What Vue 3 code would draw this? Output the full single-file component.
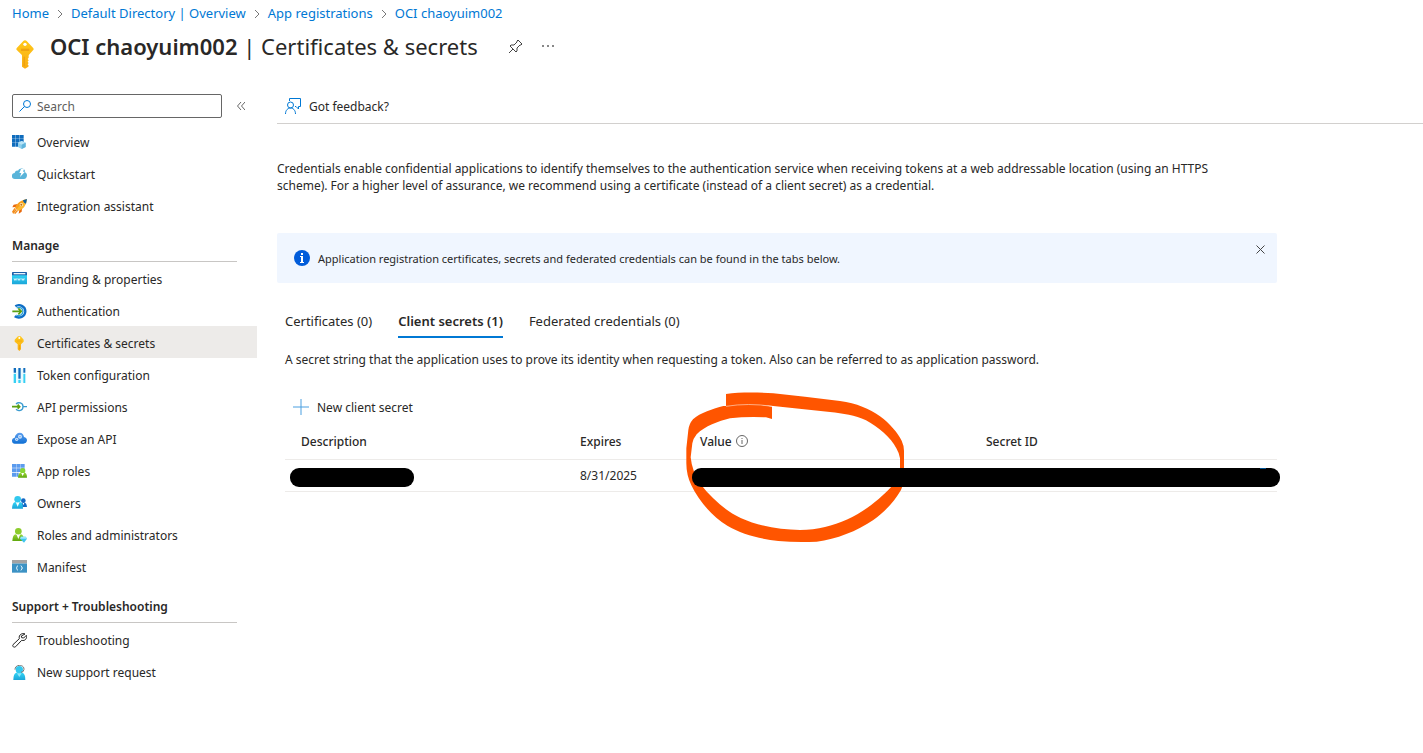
<script setup>
import { ref } from 'vue'

const search = ref('')

const crumbs = ['Home', 'Default Directory | Overview', 'App registrations', 'OCI chaoyuim002']

const groups = [
  {
    title: '',
    items: [
      { label: 'Overview', icon: 'overview' },
      { label: 'Quickstart', icon: 'quickstart' },
      { label: 'Integration assistant', icon: 'rocket' },
    ],
  },
  {
    title: 'Manage',
    items: [
      { label: 'Branding & properties', icon: 'branding' },
      { label: 'Authentication', icon: 'auth' },
      { label: 'Certificates & secrets', icon: 'key', active: true },
      { label: 'Token configuration', icon: 'token' },
      { label: 'API permissions', icon: 'permissions' },
      { label: 'Expose an API', icon: 'cloud' },
      { label: 'App roles', icon: 'approles' },
      { label: 'Owners', icon: 'owners' },
      { label: 'Roles and administrators', icon: 'admins' },
      { label: 'Manifest', icon: 'manifest' },
    ],
  },
  {
    title: 'Support + Troubleshooting',
    items: [
      { label: 'Troubleshooting', icon: 'wrench' },
      { label: 'New support request', icon: 'support' },
    ],
  },
]

const tabs = [
  { label: 'Certificates (0)' },
  { label: 'Client secrets (1)', active: true },
  { label: 'Federated credentials (0)' },
]
</script>

<template>
  <div class="page">
    <svg class="sprite" aria-hidden="true">
      <defs>
        <linearGradient id="gold" x1="0" y1="0" x2="0" y2="1">
          <stop offset="0" stop-color="#ffc81a" />
          <stop offset="1" stop-color="#f9ad14" />
        </linearGradient>
        <linearGradient id="cyan" x1="0" y1="0" x2="0" y2="1">
          <stop offset="0" stop-color="#32d4f5" />
          <stop offset="1" stop-color="#1ba5d8" />
        </linearGradient>
        <linearGradient id="azure" x1="0" y1="0" x2="0" y2="1">
          <stop offset="0" stop-color="#5ea0ef" />
          <stop offset="1" stop-color="#0f6fd4" />
        </linearGradient>
        <linearGradient id="lime" x1="0" y1="0" x2="0" y2="1">
          <stop offset="0" stop-color="#9ad63a" />
          <stop offset="1" stop-color="#5ea70c" />
        </linearGradient>
      </defs>
      <symbol id="overview" viewBox="0 0 45 45">
        <path fill="#0f6cbd" d="M0 0h11v11H0zM12 0h11v11H12zM24 0h11v11H24zM0 12h11v11H0zM12 12h11v11H12zM24 12h11v11H24zM0 24h11v11H0zM12 24h11v11H12z" />
        <path fill="#8fd0ee" d="M29 18l12 5v13l-12 6-11-6V23z" />
        <path fill="#b9e4f7" d="M29 18l12 5-12 6-11-6z" />
        <path fill="#5fb4dc" d="M29 29l12-6v13l-12 6z" />
      </symbol>
      <symbol id="quickstart" viewBox="0 0 45 45">
        <path fill="#59b4d9" d="M9 36a9 9 0 0 1-1-18c1-5 5-8 10-7 3-6 9-8 14-6 6 1 8 6 7 11 4 2 6 5 6 9 0 7-4 11-9 11z" />
        <path fill="#fff" d="M27 6h9l-3 8h6L24 30l4-12h-6z" />
      </symbol>
      <symbol id="rocket" viewBox="0 0 45 45">
        <path fill="#e8690c" d="M17 15L5 17l-4 8 11-1zM30 28l-1 10-9 6 2-12z" />
        <path fill="#f9a01b" d="M9 27C14 12 28 3 44 0c0 15-8 29-24 35z" />
        <path fill="#ffc83d" d="M14 31C22 20 34 9 44 0c0 15-8 29-24 35z" opacity=".6" />
        <path fill="#0f5f9e" d="M33 4l12-4-3 14c-5-1-8-5-9-10z" />
        <circle cx="28" cy="17" r="5" fill="#fff3d0" />
        <circle cx="28" cy="17" r="3" fill="#bd6b10" />
        <path stroke="#f28c1b" stroke-width="4" fill="none" d="M9 28L1 40M17 34L8 44M13 31L3 43" />
      </symbol>
      <symbol id="branding" viewBox="0 0 45 45">
        <path fill="url(#cyan)" d="M0 9h45v26q0 2-2 2H2q-2 0-2-2z" />
        <path fill="#1c5ea8" d="M2 0h41q2 0 2 2v8H0V2q0-2 2-2z" />
        <path fill="#e8f4fb" d="M5 3h35v4H5z" />
        <path stroke="#fff" stroke-width="2" fill="none" d="M6 19l2 6 2-5 2 5 2-6M17 19l2 6 2-5 2 5 2-6M29 19l2 6 2-5 2 5 2-6" />
      </symbol>
      <symbol id="auth" viewBox="0 0 45 45">
        <path stroke="#2ea3dc" stroke-width="4" fill="none" d="M14 12c9-5 19 0 19 10s-10 16-20 11" />
        <path stroke="#0f6fc6" stroke-width="7" fill="none" d="M10 7C22-1 40 6 40 22S22 45 8 37" />
        <path stroke="#5aa012" stroke-width="5" fill="none" d="M1 22h25M19 13l9 9-9 9" />
      </symbol>
      <symbol id="key" viewBox="0 0 45 45">
        <path fill="url(#gold)" d="M18 1h8l9 10v6l-8 8v15l-5 5-5-5V25L8 17v-6z" />
        <path fill="#fff" d="M22 3a3 3 0 1 1 0 6 3 3 0 0 1 0-6z" />
        <path fill="#e89a08" d="M14 14h16v2H14zM21 27h2v13h-2z" />
      </symbol>
      <symbol id="bigkey" viewBox="0 0 54 87">
        <path fill="url(#gold)" d="M27 1q3 0 5 2l19 20q4 4 0 8L39 44q-1 1-1 3v6l-3 4 3 4-3 4 3 4-3 4 3 4-1 3-10 6-9-6V47q0-2-1-3L3 31q-4-4 0-8L22 3q2-2 5-2z" />
        <circle cx="27" cy="13" r="5" fill="#fff" />
        <path fill="#e99a10" d="M15 26h25v3H15zM15 31h25v2H15zM23 50h3v29h-3z" />
      </symbol>
      <symbol id="token" viewBox="0 0 45 45">
        <path fill="#0f6cbd" d="M5 0h7v14H5zM19 0h7v32h-7zM34 0h6v14h-6z" />
        <path fill="#36d0f4" d="M5 17h7v28H5zM19 35h7v10h-7zM34 17h6v28h-6z" />
        <path fill="#8fe3fa" d="M14 3h2v40h-2zM29 3h2v40h-2z" opacity=".6" />
      </symbol>
      <symbol id="permissions" viewBox="0 0 45 45">
        <path stroke="#3a9bd0" stroke-width="4" fill="none" d="M12 12c7-7 21-4 21 8s-14 15-21 8M34 20h11" />
        <path stroke="#5aa012" stroke-width="5" fill="none" d="M0 20h22M17 14l6 6-6 6" />
      </symbol>
      <symbol id="cloud" viewBox="0 0 45 45">
        <path fill="url(#azure)" d="M10 35A9 9 0 0 1 8 17C9 8 16 2 23 2c8 0 12 6 13 13 6 1 9 5 9 10 0 6-5 10-11 10z" />
        <circle cx="14" cy="22" r="5" fill="#cfe4fb" />
        <circle cx="24" cy="14" r="6" fill="#cfe4fb" />
        <circle cx="14" cy="22" r="2" fill="#4b93ea" />
        <circle cx="24" cy="14" r="2" fill="#4b93ea" />
      </symbol>
      <symbol id="approles" viewBox="0 0 45 45">
        <path fill="#5b9bee" d="M0 0h12v11H0zM13 0h12v11H13zM26 0h12v11H26zM0 13h12v11H0zM13 13h12v11H13zM0 26h12v12H0zM13 26h7v12h-7zM26 13h12v7H26z" />
        <circle cx="32" cy="20" r="8" fill="#86d633" />
        <path fill="url(#lime)" d="M18 41q1-15 9-15l5 4 5-4q8 0 8 15z" />
        <path fill="#fff" d="M28 27h8l-4 10z" />
      </symbol>
      <symbol id="owners" viewBox="0 0 45 45">
        <circle cx="34" cy="14" r="7" fill="#1368c4" />
        <path fill="#1368c4" d="M24 33q1-13 7-13l3 3 3-3q7 0 8 13z" />
        <path fill="#fff" d="M32 21h5l-3 7z" />
        <circle cx="17" cy="10" r="10" fill="#32c8ee" />
        <path fill="url(#cyan)" d="M0 38q1-19 10-20l7 5 7-5q9 1 9 20z" />
        <path fill="#fff" d="M12 20h10l-5 12z" />
      </symbol>
      <symbol id="admins" viewBox="0 0 45 45">
        <circle cx="19" cy="10" r="10" fill="#8ccc2c" />
        <path fill="url(#lime)" d="M1 39q1-19 10-20l8 5 8-5q8 1 9 20z" />
        <path fill="#fff" d="M14 20h10l-5 13z" />
        <path fill="#3fc6ee" d="M27 26h14l4 6-9 12-12-12z" />
        <path fill="#9be7fa" d="M27 26h14l4 6H24z" />
      </symbol>
      <symbol id="manifest" viewBox="0 0 45 45">
        <path fill="#3c92c4" d="M0 10h45v28H0z" />
        <path fill="#a3a3a3" d="M0 0h45v10H0z" />
        <path stroke="#d7eefa" stroke-width="3" fill="none" d="M18 17q-3 0-3 4 0 3-3 3 3 0 3 3 0 4 3 4M26 17q3 0 3 4 0 3 3 3-3 0-3 3 0 4-3 4" />
      </symbol>
      <symbol id="wrench" viewBox="0 0 45 45">
        <path stroke="#222" stroke-width="3" fill="none" stroke-linejoin="round" d="M39 3c-8-4-20 2-17 14L3 35c-3 5 3 10 8 6l18-19c10 3 17-6 14-15l-8 8-6-1-1-5z" />
      </symbol>
      <symbol id="support" viewBox="0 0 45 45">
        <path stroke="#777" stroke-width="3" fill="none" d="M9 14C8-3 37-3 36 13" />
        <circle cx="22" cy="14" r="11" fill="#32c8ee" />
        <path fill="url(#cyan)" d="M4 45q0-20 9-22h18q9 2 9 22z" />
        <path fill="#8ee6fa" d="M15 25h14l-7 11z" />
        <path stroke="#777" stroke-width="3" fill="none" d="M36 13q-1 9-9 9" />
      </symbol>
    </svg>

    <header class="top">
      <nav class="crumbs" aria-label="Breadcrumb">
        <template v-for="(c, i) in crumbs" :key="c">
          <svg v-if="i" class="chevron" viewBox="0 0 6 10" aria-hidden="true">
            <path d="M1 1l4 4-4 4" fill="none" stroke="#777" />
          </svg>
          <a href="#">{{ c }}</a>
        </template>
      </nav>
      <div class="heading">
        <svg class="bigkey" aria-hidden="true"><use href="#bigkey" /></svg>
        <h1><b>OCI chaoyuim002</b> | Certificates &amp; secrets</h1>
        <button class="plain pin" type="button" aria-label="Pin">
          <svg viewBox="0 0 14 14" width="14" height="14" fill="none" stroke="#444">
            <path d="M9 1l4 4-1 1-1 0-3 3 0 3-1 1-6-6 1-1 3 0 3-3 0-1zM4 10l-4 4" />
          </svg>
        </button>
        <button class="plain more" type="button" aria-label="More">
          <svg viewBox="0 0 12 2" width="12" height="2" fill="#888">
            <path d="M0 0h2v2H0zM5 0h2v2H5zM10 0h2v2h-2z" />
          </svg>
        </button>
      </div>
    </header>

    <div class="body">
      <aside class="side">
        <div class="searchrow">
          <div class="search">
            <svg viewBox="0 0 12 12" width="12" height="12" fill="none" stroke="#0078d4" aria-hidden="true">
              <circle cx="8" cy="4" r="3.5" />
              <path d="M5.500 6.500L0.500 11.500" />
            </svg>
            <input v-model="search" type="text" placeholder="Search" aria-label="Search" />
          </div>
          <button class="plain" type="button" aria-label="Collapse menu">
            <svg viewBox="0 0 8 8" width="8" height="8" fill="none" stroke="#666">
              <path d="M4 0L0.500 4 4 8M8 0L4.500 4 8 8" />
            </svg>
          </button>
        </div>
        <nav aria-label="Resource menu">
          <section v-for="g in groups" :key="g.title">
            <h2 v-if="g.title">{{ g.title }}</h2>
            <a v-for="it in g.items" :key="it.label" href="#" class="item" :class="{ active: it.active }">
              <svg class="ico" aria-hidden="true"><use :href="'#' + it.icon" /></svg>
              <span>{{ it.label }}</span>
            </a>
          </section>
        </nav>
      </aside>

      <main class="main">
        <div class="toolbar">
          <button class="plain" type="button">
            <svg viewBox="0 0 16 16" width="16" height="16" fill="none" stroke="#0078d4" aria-hidden="true">
              <path d="M4.500 3V.500h11v8h-2v2.500l-2.500-2.500h-1" />
              <circle cx="5.500" cy="7" r="3" />
              <path d="M.500 16c0-8 10-8 10 0" />
            </svg>
            Got feedback?
          </button>
        </div>

        <div class="content">
          <p class="intro">
            Credentials enable confidential applications to identify themselves to the authentication service when
            receiving tokens at a web addressable location (using an HTTPS scheme). For a higher level of assurance, we
            recommend using a certificate (instead of a client secret) as a credential.
          </p>

          <div class="banner" role="status">
            <svg viewBox="0 0 16 16" width="16" height="16" aria-hidden="true">
              <circle cx="8" cy="8" r="8" fill="#015cda" />
              <path fill="#fff" d="M7 3h2v2H7zM6 6h3v6h1v1H6v-1h1V7H6z" />
            </svg>
            <span>Application registration certificates, secrets and federated credentials can be found in the tabs below.</span>
            <button class="plain close" type="button" aria-label="Dismiss">
              <svg viewBox="0 0 9 9" width="9" height="9" stroke="#444"><path d="M0.500 0.500l8 8M8.500 0.500l-8 8" /></svg>
            </button>
          </div>

          <div class="panel">
            <div class="tabs" role="tablist">
              <button
                v-for="t in tabs"
                :key="t.label"
                class="plain tab"
                :class="{ active: t.active }"
                type="button"
                role="tab"
                :aria-selected="!!t.active"
              >
                {{ t.label }}
              </button>
            </div>
            <p class="hint">
              A secret string that the application uses to prove its identity when requesting a token. Also can be
              referred to as application password.
            </p>
            <button class="plain new" type="button">
              <svg viewBox="0 0 16 16" width="16" height="16" stroke="#4a9fe0" aria-hidden="true">
                <path d="M8 0v16M0 8h16" />
              </svg>
              New client secret
            </button>

            <div class="tablewrap">
              <table>
                <colgroup>
                  <col class="c1" />
                  <col class="c2" />
                  <col class="c3" />
                  <col />
                </colgroup>
                <thead>
                  <tr>
                    <th scope="col">Description</th>
                    <th scope="col">Expires</th>
                    <th scope="col">
                      <span class="value">
                        Value
                        <svg viewBox="0 0 12 12" width="12" height="12" fill="none" stroke="#666" aria-hidden="true">
                          <circle cx="6" cy="6" r="5.500" />
                          <path d="M6 5v4M6 3v1" />
                        </svg>
                      </span>
                    </th>
                    <th scope="col">Secret ID</th>
                  </tr>
                </thead>
                <tbody>
                  <tr>
                    <td></td>
                    <td>8/31/2025</td>
                    <td></td>
                    <td></td>
                  </tr>
                </tbody>
              </table>
              <svg class="ring" viewBox="0 0 780 540" aria-hidden="true">
                <path
                  fill="#ff5500"
                  d="M168 42C210 36 265 37 310 40L405 50L510 63C560 70 598 86 630 109C660 131 684 160 695 182Q702 197 702 212V290Q702 312 693 330C675 362 645 395 610 420C560 454 500 477 440 485Q380 488 325 483C270 477 215 462 172 437C125 409 85 360 64 316Q49 285 49 250V205L55 150Q57 132 69 118C90 98 130 86 160 78L168 78C210 72 260 72 306 80V117L288 112Q230 109 180 115C145 124 105 138 80 163Q70 175 67 190L62 232Q66 275 92 313C125 355 165 392 212 414C265 438 330 449 390 450Q430 450 465 441C510 431 555 410 590 385C625 360 652 334 672 312Q690 285 690 262V235Q688 220 679 205C663 173 625 142 588 121C555 106 520 100 480 96L310 78Q240 70 168 78Z"
                />
                <path stroke="#ffd9c4" stroke-width="2" fill="none" d="M168 79Q235 68 306 79" />
              </svg>
              <svg class="marks" viewBox="0 0 996 20" aria-hidden="true">
                <rect x="5" y="0" width="124" height="19" rx="9" />
                <rect x="407" y="0" width="588" height="19" rx="9" />
                <path d="M975 0h6v1h-6z" fill="#00508f" />
              </svg>
            </div>
          </div>
        </div>
      </main>
    </div>
  </div>
</template>

<style>
body {
  background: #fff;
}
</style>

<style scoped>
.page {
  font-family: "Noto Sans", "Open Sans", sans-serif;
  font-size: 12px;
  line-height: 17px;
  color: #292827;
}
.page * {
  box-sizing: border-box;
}
.sprite {
  position: absolute;
  width: 0;
  height: 0;
}
a {
  color: #0078d4;
  text-decoration: none;
}
.plain {
  font: inherit;
  color: inherit;
  background: none;
  border: 0;
  padding: 0;
  display: flex;
  align-items: center;
}
.crumbs {
  display: flex;
  align-items: center;
  gap: 8px;
  padding: 5px 12px 0;
  font-size: 13px;
}
.chevron {
  width: 6px;
  height: 10px;
}
.heading {
  display: flex;
  align-items: center;
  height: 48px;
  padding-left: 16px;
}
.bigkey {
  width: 18px;
  height: 29px;
  margin: 16px 16px 0 0;
}
h1 {
  margin: 0;
  font-size: 22px;
  line-height: 30px;
  font-weight: 400;
}
h1 b {
  font-weight: 600;
}
.pin {
  margin-left: 31px;
}
.more {
  margin-left: 19px;
}
.body {
  display: flex;
  padding-top: 24px;
}
.side {
  flex: none;
  width: 257px;
}
.searchrow {
  display: flex;
  align-items: center;
  gap: 15px;
  padding: 0 12px;
  margin-bottom: 7px;
}
.search {
  display: flex;
  align-items: center;
  gap: 6px;
  width: 210px;
  height: 24px;
  padding: 0 6px;
  border: 1px solid #666;
  border-radius: 2px;
}
.search input {
  flex: 1;
  min-width: 0;
  border: 0;
  padding: 0;
  outline: 0;
  font: inherit;
  background: none;
}
.search input::placeholder {
  color: #605e5c;
  opacity: 1;
}
h2 {
  margin: 0 20px 0 12px;
  padding: 16px 0 7px;
  font-size: 12px;
  line-height: 17px;
  font-weight: 600;
  border-bottom: 1px solid #c8c6c4;
}
.item {
  display: flex;
  align-items: center;
  gap: 10px;
  height: 32px;
  padding: 2px 0 0 12px;
  color: inherit;
}
.item.active {
  background: #edebe9;
}
.ico {
  width: 15px;
  height: 15px;
}
.main {
  flex: 1;
  min-width: 0;
  padding-left: 20px;
}
.toolbar {
  height: 30px;
  padding-left: 8px;
  border-bottom: 1px solid #d2d0ce;
}
.toolbar .plain {
  height: 24px;
  gap: 8px;
}
.content {
  max-width: 1000px;
}
p {
  margin: 0;
}
.intro {
  padding: 36px 20px 39px 0;
}
.banner {
  display: flex;
  align-items: center;
  gap: 8px;
  height: 50px;
  padding: 0 12px 0 17px;
  font-size: 11px;
  background: #f0f6ff;
  border-radius: 2px;
}
.close {
  margin: 0 0 17px auto;
}
.panel {
  padding: 30px 0 0 8px;
}
.tabs {
  display: flex;
  gap: 26px;
}
.tab {
  height: 25px;
  padding-bottom: 7px;
  font-size: 13px;
  border-bottom: 2px solid transparent;
}
.tab.active {
  font-weight: 600;
  border-color: #0078d4;
}
.hint {
  padding: 13px 0 22px;
}
.new {
  height: 34px;
  padding-left: 8px;
  gap: 8px;
}
.tablewrap {
  position: relative;
}
table {
  width: 100%;
  table-layout: fixed;
  border-collapse: collapse;
}
.c1 {
  width: 279px;
}
.c2 {
  width: 120px;
}
.c3 {
  width: 286px;
}
th,
td {
  height: 32px;
  padding: 0 0 0 16px;
  text-align: left;
  font-weight: 400;
  border-bottom: 1px solid #edebe9;
}
th {
  height: 35px;
  font-weight: 500;
}
.value {
  display: flex;
  align-items: center;
  gap: 4px;
}
.ring {
  position: absolute;
  left: 385px;
  top: -44px;
  width: 260px;
  height: 180px;
}
.marks {
  position: absolute;
  left: 0;
  top: 44px;
  width: 996px;
  height: 20px;
}
</style>
